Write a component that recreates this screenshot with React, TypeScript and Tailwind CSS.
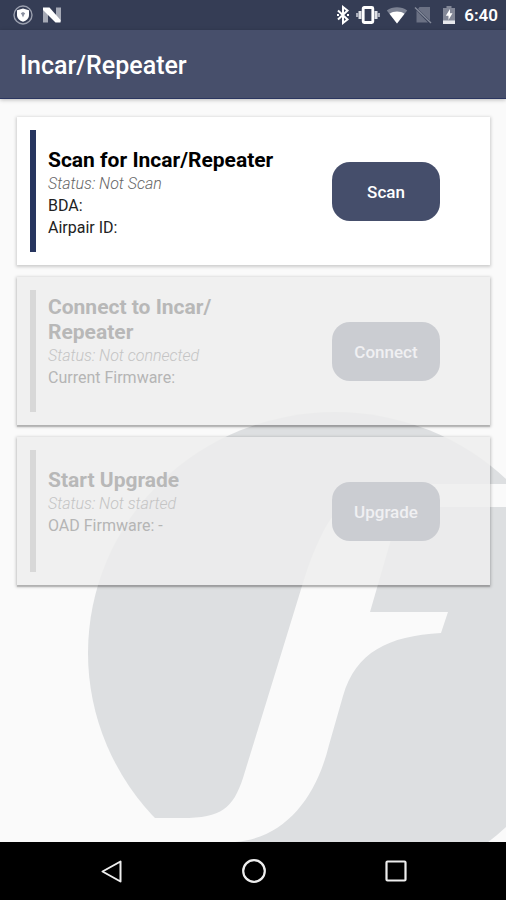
import { clsx } from 'clsx';

type StepCardProps = {
    title: string;
    status: string;
    details: string[];
    action: string;
    disabled?: boolean;
};

const steps: StepCardProps[] = [
    {
        title: 'Scan for Incar/Repeater',
        status: 'Not Scan',
        details: ['BDA:', 'Airpair ID:'],
        action: 'Scan',
    },
    {
        title: 'Connect to Incar/\u200bRepeater',
        status: 'Not connected',
        details: ['Current Firmware:'],
        action: 'Connect',
        disabled: true,
    },
    {
        title: 'Start Upgrade',
        status: 'Not started',
        details: ['OAD Firmware: -'],
        action: 'Upgrade',
        disabled: true,
    },
];

function StatusBar() {
    return (
        <div className="flex h-[30px] items-center justify-between bg-[#353d55] pr-2 pl-3 text-white">
            <div className="flex items-center gap-2">
                {/* VPN shield */}
                <svg viewBox="0 0 22 22" className="size-[22px]">
                    <circle cx="11" cy="11" r="9" fill="none" stroke="#9a9fae" strokeWidth="1.4" />
                    <path d="M11 4.5 17 6.3V11c0 3.2-2.5 5.600-6 6.800C7.500 16.600 5 14.200 5 11V6.300Z" fill="#fff" />
                    <path d="M8.800 9.200 11 8l2.200 1.200-1 1.500L11 13.500 9.800 10.700Z" fill="#8b90a0" />
                </svg>
                {/* Android N */}
                <svg viewBox="0 0 20 16" className="h-4 w-5">
                    <path d="M1 1.500h5v14H1ZM14 .5h5v14h-5Z" fill="#a5a9b5" />
                    <path d="M1 .5h6.500L18.500 13v2.500h-5L1 3Z" fill="#fff" />
                </svg>
            </div>

            <div className="flex items-center">
                <svg viewBox="0 0 14 20" className="mr-1.5 h-5 w-3.5" fill="none" stroke="#fff" strokeWidth="2">
                    <path d="M2 5.500 11.500 14.500 7 18V2L11.500 5.500 2 14.500" />
                    <path d="M1 10h2M11 10h2" />
                </svg>
                <svg viewBox="0 0 24 20" className="mr-1.5 h-5 w-6">
                    <rect x="7.200" y="2.500" width="9.600" height="15" rx="1" fill="none" stroke="#fff" strokeWidth="2.800" />
                    <path d="M2.500 6h3v8h-3ZM18.500 6h3v8h-3Z" fill="#dfe1e6" />
                    <path d="M0 8h2.500v4H0ZM21.500 8H24v4h-2.500Z" fill="#aaaebb" />
                </svg>
                <svg viewBox="0 0 22 18" className="mr-1.5 h-[18px] w-[22px]">
                    <path d="M11 17.500.800 4.500C6.500.300 15.500.300 21.200 4.500Z" fill="#7c8293" />
                    <path d="M11 17.500 3.500 7.800c4-3 11-3 15 0Z" fill="#fff" />
                </svg>
                <svg viewBox="0 0 18 18" className="mr-2.5 size-[18px]">
                    <path d="M5.500 1H16v13.500L4 3Z" fill="#6b7184" />
                    <path d="M2.500 4.500 14 16.500H2.500Z" fill="#6b7184" />
                    <path d="M1 1.500 17 17" stroke="#858b9b" strokeWidth="1.400" />
                </svg>
                <svg viewBox="0 0 14 20" className="mr-2 h-5 w-3.5">
                    <path d="M4.500 1h5v2H13v16H1V3h3.500Z" fill="#828797" />
                    <path d="M1 15.500h12V19H1Z" fill="#e7e8ec" />
                    <path d="M8 4 3.800 10.800h2.700V15l4-6.800H8Z" fill="#fff" />
                </svg>
                <span className="text-[17px] leading-5 font-semibold">6:40</span>
            </div>
        </div>
    );
}

function Watermark() {
    return (
        <svg
            viewBox="0 99 506 743"
            preserveAspectRatio="xMaxYMax slice"
            className="col-start-1 row-start-1 h-full w-full"
            aria-hidden="true"
        >
            <ellipse cx="335" cy="653" rx="247" ry="241" fill="#dddfe1" />
            <path
                d="M506 484H420C365 484 339 500 323 532C314 550 308 566 302 586L243 778C233 808 222 818 182 818H60V842H235C285 838 316 798 329 745L343 696C356 652 388 636 441 633L448 612H370L390 543C397 518 410 507 440 507H506Z"
                fill="#fafafa"
            />
        </svg>
    );
}

function StepCard({ title, status, details, action, disabled }: StepCardProps) {
    return (
        <section
            className={clsx(
                'flex h-[148px] items-center pl-[13px]',
                disabled
                    ? 'bg-[#ededed]/85 shadow-[0_1px_3px_1px_rgba(0,0,0,0.2),0_2px_1px_rgba(0,0,0,0.15)]'
                    : 'bg-white shadow-[0_1px_3px_1px_rgba(0,0,0,0.18)]',
            )}
        >
            <div className={clsx('h-[122px] w-1.5 shrink-0', disabled ? 'bg-[#d8d8d8]' : 'bg-[#27355f]')} />
            <div className="min-w-0 flex-1 pt-1 pl-3">
                <h2
                    className={clsx(
                        'text-[21px] leading-[25px] font-bold',
                        disabled ? 'max-w-[200px] text-[#b8b8b8]' : 'text-black',
                    )}
                >
                    {title}
                </h2>
                <p
                    className={clsx(
                        'text-[16px] leading-[22px] font-light italic',
                        disabled ? 'text-[#c4c4c4]' : 'text-[#666666]',
                    )}
                >
                    Status: {status}
                </p>
                {/* Always two lines high, so the text keeps its place */}
                <div className={clsx('min-h-11 text-[16px] leading-[22px]', disabled ? 'text-[#b5b5b5]' : 'text-[#222222]')}>
                    {details.map((detail) => (
                        <p key={detail}>{detail}</p>
                    ))}
                </div>
            </div>
            <button
                type="button"
                disabled={disabled}
                className={clsx(
                    'mr-[50px] h-[59px] w-[108px] shrink-0 rounded-[18px] pt-1 text-[17px] font-medium',
                    disabled ? 'bg-[#cbcdd2] text-[#f0f0f2]' : 'bg-[#454e6b] text-white',
                )}
            >
                {action}
            </button>
        </section>
    );
}

function NavigationBar() {
    return (
        <nav className="flex h-[58px] items-center justify-center gap-[114px] bg-black pl-0.5 text-[#eeeeee]">
            <button type="button" aria-label="Back">
                <svg viewBox="0 0 28 28" className="size-7" fill="none" stroke="currentColor" strokeWidth="2">
                    <path d="M22.500 4.500v20L4.500 14.500Z" strokeLinejoin="round" />
                </svg>
            </button>
            <button type="button" aria-label="Home">
                <svg viewBox="0 0 28 28" className="size-7" fill="none" stroke="currentColor" strokeWidth="2.200">
                    <circle cx="14" cy="14" r="10.800" />
                </svg>
            </button>
            <button type="button" aria-label="Recent apps">
                <svg viewBox="0 0 28 28" className="size-7" fill="none" stroke="currentColor" strokeWidth="2.200">
                    <rect x="4.500" y="4.500" width="19" height="19" rx="1" />
                </svg>
            </button>
        </nav>
    );
}

export default function App() {
    return (
        <div className="flex min-h-screen flex-col bg-[#fafafa] font-[Roboto,sans-serif]">
            <StatusBar />
            <header className="z-10 flex h-[69px] items-center border-b border-[#2b3660] bg-[#474f6b] px-5 pt-1 shadow-[0_1px_4px_rgba(0,0,0,0.25)]">
                <h1 className="text-[25px] leading-8 font-medium text-white">Incar/Repeater</h1>
            </header>

            <main className="grid flex-1 overflow-hidden">
                <Watermark />
                <div className="z-0 col-start-1 row-start-1 flex flex-col gap-3 pt-[18px] pr-4 pb-4 pl-[17px]">
                    {steps.map((step) => (
                        <StepCard key={step.action} {...step} />
                    ))}
                </div>
            </main>

            <NavigationBar />
        </div>
    );
}
